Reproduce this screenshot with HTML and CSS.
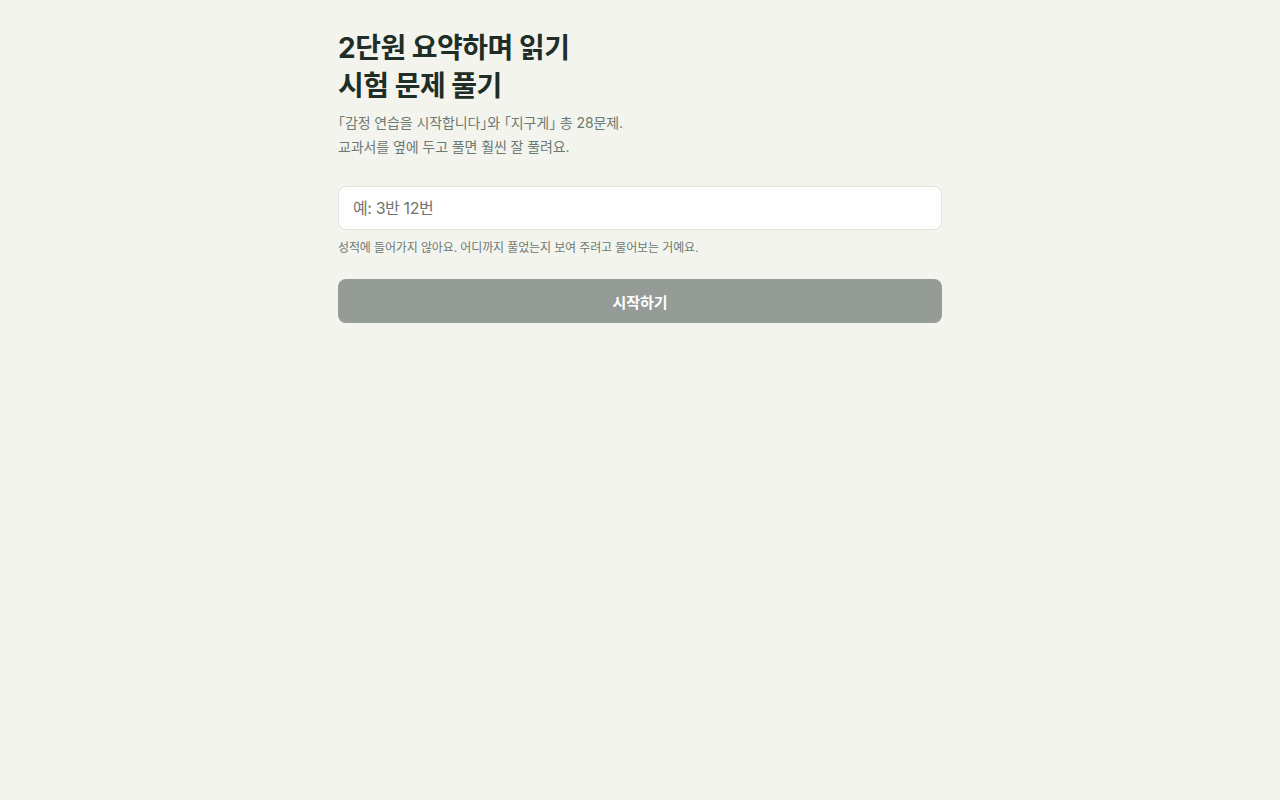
FILE: index.html
```html
<!DOCTYPE html>
<html lang="ko">
<head>
<meta charset="utf-8">
<title>시험 문제 풀기</title>
<link rel="stylesheet" href="styles.css">
</head>
<body>
<main class="page">
  <h1 class="title">2단원 요약하며 읽기<br>시험 문제 풀기</h1>
  <p class="sub">「감정 연습을 시작합니다」와 「지구게」 총 28문제.<br>교과서를 옆에 두고 풀면 훨씬 잘 풀려요.</p>
  <input class="field" type="text" placeholder="예: 3반 12번">
  <p class="hint">성적에 들어가지 않아요. 어디까지 풀었는지 보여 주려고 물어보는 거예요.</p>
  <button class="start" type="button">시작하기</button>
</main>
</body>
</html>
```
FILE: styles.css
```css
html, body {
  margin: 0;
  padding: 0;
  background: #f4f4ef;
}
body {
  font-family: Inter, "Noto Sans CJK KR", sans-serif;
  color: #1f2e26;
}
.page {
  width: 604px;
  margin: 0 auto;
  padding-top: 29px;
  display: flex;
  flex-direction: column;
}
.title {
  margin: 0;
  font-size: 28px;
  line-height: 38px;
  font-weight: 700;
  letter-spacing: -0.5px;
  color: #1f2e26;
}
.sub {
  margin: 6px 0 0;
  font-size: 14px;
  line-height: 24px;
  letter-spacing: -0.1px;
  color: #6d7a72;
  font-feature-settings: "halt";
}
.field {
  margin-top: 27px;
  height: 44px;
  box-sizing: border-box;
  border: 1px solid #e2e4df;
  border-radius: 8px;
  background: #ffffff;
  padding: 0 14px;
  font-family: inherit;
  font-size: 16px;
  letter-spacing: -0.4px;
  color: #1f2e26;
  outline: none;
}
.field::placeholder {
  color: #707570;
}
.hint {
  margin: 9px 0 0;
  font-size: 12px;
  line-height: 18px;
  letter-spacing: -0.12px;
  color: #6d7a72;
}
.start {
  margin-top: 22px;
  height: 44px;
  border: none;
  border-radius: 8px;
  background: #959b96;
  color: #ffffff;
  font-family: inherit;
  font-size: 15px;
  font-weight: 600;
}
```
